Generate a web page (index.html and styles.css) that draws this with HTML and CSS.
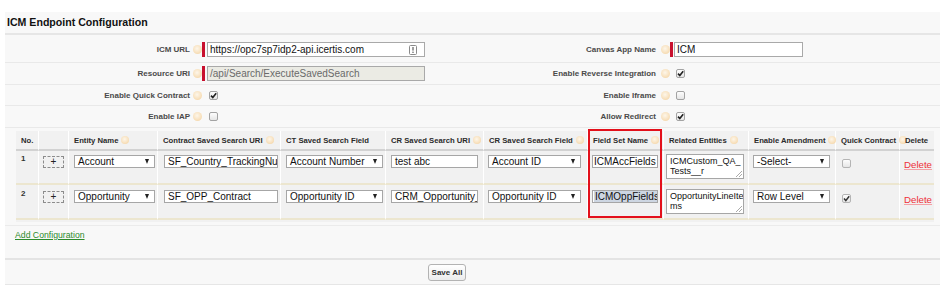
FILE: index.html
```html
<!DOCTYPE html>
<html>
	<head>
		<meta charset="UTF-8">
		<title>ICM Endpoint Configuration</title>
		<link rel="stylesheet" href="styles.css">
	</head>
	<body>
		<div class="panel">
			<div class="panel-title">ICM Endpoint Configuration</div>

			<div class="form">
				<div class="row first">
					<label>ICM URL</label><span class="help"></span>
					<div class="field"><span class="req"></span><div class="txt wide">https://opc7sp7idp2-api.icertis.com<svg class="key" width="8" height="10" viewBox="0 0 8 10"><rect x="0.5" y="0.5" width="7" height="9" rx="1" fill="#fff" stroke="#8a8a8a"/><rect x="3.3" y="2" width="1.4" height="3.6" fill="#777"/><rect x="3.3" y="6.6" width="1.4" height="1.4" fill="#777"/></svg></div></div>
					<label>Canvas App Name</label><span class="help"></span>
					<div class="field"><span class="req"></span><div class="txt short">ICM</div></div>
				</div>
				<div class="row">
					<label>Resource URI</label><span class="help"></span>
					<div class="field"><span class="req"></span><div class="txt wide off">/api/Search/ExecuteSavedSearch</div></div>
					<label>Enable Reverse Integration</label><span class="help"></span>
					<div class="field"><span class="cb on r"><svg width="9" height="9" viewBox="0 0 9 9"><path d="M2 4.6 L3.8 6.6 L7.2 2.2" fill="none" stroke="#222" stroke-width="1.6"/></svg></span></div>
				</div>
				<div class="row short-row">
					<label>Enable Quick Contract</label><span class="help"></span>
					<div class="field"><span class="cb on"><svg width="9" height="9" viewBox="0 0 9 9"><path d="M2 4.6 L3.8 6.6 L7.2 2.2" fill="none" stroke="#222" stroke-width="1.6"/></svg></span></div>
					<label>Enable Iframe</label><span class="help"></span>
					<div class="field"><span class="cb r"></span></div>
				</div>
				<div class="row">
					<label>Enable IAP</label><span class="help"></span>
					<div class="field"><span class="cb"></span></div>
					<label>Allow Redirect</label><span class="help"></span>
					<div class="field"><span class="cb on r"><svg width="9" height="9" viewBox="0 0 9 9"><path d="M2 4.6 L3.8 6.6 L7.2 2.2" fill="none" stroke="#222" stroke-width="1.6"/></svg></span></div>
				</div>
			</div>

			<div class="grid-wrap">
				<table class="cfg">
					<colgroup>
						<col class="w-no"><col class="w-add"><col class="w-ent"><col class="w-csu"><col class="w-ctf"><col class="w-cru">
						<col class="w-crf"><col class="w-fsn"><col class="w-rel"><col class="w-amd"><col class="w-qc"><col class="w-del">
					</colgroup>
					<tr class="head">
						<th>No.</th>
						<th></th>
						<th>Entity Name<span class="help sm"></span></th>
						<th>Contract Saved Search URI<span class="help sm"></span></th>
						<th>CT Saved Search Field</th>
						<th>CR Saved Search URI<span class="help sm"></span></th>
						<th>CR Saved Search Field<span class="help sm"></span></th>
						<th>Field Set Name<span class="help sm"></span></th>
						<th>Related Entities<span class="help sm"></span></th>
						<th>Enable Amendment<span class="help sm"></span></th>
						<th>Quick Contract<span class="help sm"></span></th>
						<th>Delete</th>
					</tr>
					<tr class="r1">
						<td class="num">1</td>
						<td><span class="plus">+</span></td>
						<td><div class="sel s-ent">Account<span class="arr"></span></div></td>
						<td><div class="inp i-csu">SF_Country_TrackingNumber</div></td>
						<td><div class="sel s-ctf">Account Number<span class="arr"></span></div></td>
						<td><div class="inp i-cru">test abc</div></td>
						<td><div class="sel s-crf">Account ID<span class="arr"></span></div></td>
						<td><div class="inp i-fsn">ICMAccFields</div></td>
						<td><div class="area">ICMCustom_QA_<br>Tests__r<span class="grip"></span></div></td>
						<td><div class="sel s-amd">-Select-<span class="arr"></span></div></td>
						<td><span class="cb qc"></span></td>
						<td><a class="del" href="#">Delete</a></td>
					</tr>
					<tr class="r2">
						<td class="num">2</td>
						<td><span class="plus">+</span></td>
						<td><div class="sel s-ent">Opportunity<span class="arr"></span></div></td>
						<td><div class="inp i-csu">SF_OPP_Contract</div></td>
						<td><div class="sel s-ctf">Opportunity ID<span class="arr"></span></div></td>
						<td><div class="inp i-cru">CRM_Opportunity_Contract</div></td>
						<td><div class="sel s-crf">Opportunity ID<span class="arr"></span></div></td>
						<td><div class="inp i-fsn"><span class="picked">ICMOppFields</span></div></td>
						<td><div class="area">OpportunityLineIte<br>ms<span class="grip"></span></div></td>
						<td><div class="sel s-amd">Row Level<span class="arr"></span></div></td>
						<td><span class="cb qc on"><svg width="9" height="9" viewBox="0 0 9 9"><path d="M2 4.6 L3.8 6.6 L7.2 2.2" fill="none" stroke="#333" stroke-width="1.5"/></svg></span></td>
						<td><a class="del" href="#">Delete</a></td>
					</tr>
				</table>
				<div class="mark"></div>
			</div>

			<div class="add-row"><a class="add" href="#">Add Configuration</a></div>

			<div class="actions"><span class="btn">Save All</span></div>
		</div>
	</body>
</html>
```

FILE: styles.css
```css
*{
	box-sizing: border-box;
	margin: 0;
	padding: 0;
}

body{
	background: #fff;
	font-family: "Liberation Sans", Arial, sans-serif;
	color: #333;
}

.panel{
	width: 935px;
	margin: 12px 0 0 5px;
	background: #f8f8f8;
}
.panel-title{
	height: 23px;
	line-height: 21px;
	padding-left: 2px;
	font-size: 10.6px;
	font-weight: bold;
	color: #111;
	border-bottom: 2px solid #e6e6e6;
}

/* top form, two columns of label / help / field */
.row{
	display: grid;
	grid-template-columns: 187px 10px 280px 178px 10px 1fr;
	align-items: center;
	height: 22px;
	border-bottom: 1px solid #e9e9e9;
}
.row.first{
	height: 28px;
	padding-top: 2px;
}
.row.short-row{
	height: 21px;
}
.row label{
	text-align: right;
	font-size: 8px;
	font-weight: bold;
	color: #4a4a4a;
	white-space: nowrap;
	padding-right: 2px;
}
.row label:nth-of-type(2){
	padding-right: 4px;
}
.field{
	display: flex;
	align-items: center;
}

.help{
	display: inline-block;
	width: 9px;
	height: 9px;
	border-radius: 50%;
	background: radial-gradient(circle at 45% 40%, #fdf6ea 0, #f8e2c0 55%, #f1cd97 100%);
	justify-self: center;
}
.help.sm{
	width: 8px;
	height: 8px;
	margin-left: 3px;
	vertical-align: -1px;
}

.req{
	width: 3px;
	height: 15px;
	background: #c8102e;
	margin-right: 2px;
}
.txt{
	position: relative;
	height: 15px;
	border: 1px solid #a9a9a9;
	background: #fff;
	font-size: 10px;
	line-height: 13px;
	padding: 0 2px;
	color: #111;
	white-space: nowrap;
	overflow: hidden;
}
.txt.wide{
	width: 218px;
}
.txt.short{
	width: 129px;
	margin-left: -1px;
}
.txt.off{
	background: #ebebe4;
	color: #6a6a6a;
}
.key{
	position: absolute;
	right: 7px;
	top: 2px;
}

.cb{
	display: inline-block;
	width: 9px;
	height: 9px;
	border: 1px solid #a3a3a3;
	border-radius: 2px;
	background: linear-gradient(#fdfdfd, #e6e6e6);
	margin-left: 7px;
	position: relative;
}
.cb svg{
	position: absolute;
	left: -1px;
	top: -1px;
}
.cb.r{
	margin-left: 6px;
}

/* configuration grid */
.grid-wrap{
	position: relative;
	width: 918px;
	margin: 3px 0 0 11px;
	padding-bottom: 2px;
	background: #f1f1f1;
}
.cfg{
	width: 918px;
	table-layout: fixed;
	border-collapse: separate;
	border-spacing: 0;
}
.w-no{width: 22px;}
.w-add{width: 30px;}
.w-ent{width: 89px;}
.w-csu{width: 123px;}
.w-ctf{width: 105px;}
.w-cru{width: 98px;}
.w-crf{width: 104px;}
.w-fsn{width: 76px;}
.w-rel{width: 85px;}
.w-amd{width: 87px;}
.w-qc{width: 64px;}
.w-del{width: 35px;}

.cfg tr.head{
	height: 20px;
}
.cfg tr.r1{
	height: 34px;
}
.cfg tr.r2{
	height: 35px;
}
.cfg th{
	text-align: left;
	font-size: 7.7px;
	font-weight: bold;
	color: #2b2b2b;
	line-height: 17px;
	padding: 0 0 0 5px;
	white-space: nowrap;
	border-left: 1px solid #fff;
	border-bottom: 2px solid #d2d2d2;
}
.cfg th:first-child{
	border-left: 0;
}
.cfg td{
	vertical-align: top;
	padding: 3px 0 0 0;
	border-left: 1px solid #fff;
	border-bottom: 2px solid #ece6cf;
}
.cfg tr.r2 td{
	padding-top: 4px;
}
.cfg td:first-child{
	border-left: 0;
}
.cfg td.num{
	font-size: 8px;
	font-weight: bold;
	padding-top: 3px;
	padding-left: 5px;
}

.plus{
	display: block;
	width: 21px;
	height: 12px;
	margin: 2px 0 0 4px;
	border: 1px dashed #8c8c8c;
	text-align: center;
	font-size: 10px;
	line-height: 9px;
	color: #222;
}

.sel, .inp, .area{
	position: relative;
	height: 13px;
	border: 1px solid #a6a6a6;
	background: #fff;
	font-size: 10px;
	line-height: 11px;
	padding: 0 3px;
	color: #111;
	white-space: nowrap;
	overflow: hidden;
	margin-top: 1px;
}
.arr{
	position: absolute;
	right: 5px;
	top: 3px;
	width: 0;
	height: 0;
	border-left: 2.5px solid transparent;
	border-right: 2.5px solid transparent;
	border-top: 5px solid #222;
}
.s-ent{width: 81px; margin-left: 5px;}
.i-csu{width: 114px; margin-left: 6px;}
.s-ctf{width: 97px; margin-left: 5px;}
.i-cru{width: 87px; margin-left: 5px;}
.s-crf{width: 93px; margin-left: 4px;}
.i-fsn{width: 66px; margin-left: 4px; padding: 0 1px;}
.s-amd{width: 77px; margin-left: 4px;}
.picked{
	background: #cdd6e2;
	padding: 0 1px;
}

.area{
	width: 78px;
	height: 25px;
	margin: 0 0 0 2px;
	font-size: 9px;
	line-height: 10px;
	padding: 1px 3px;
	white-space: normal;
}
.grip{
	position: absolute;
	right: 1px;
	bottom: 1px;
	width: 6px;
	height: 6px;
	background: linear-gradient(135deg, transparent 45%, #aaa 45%, #aaa 55%, transparent 55%, transparent 72%, #aaa 72%, #aaa 82%, transparent 82%);
}

.cb.qc{
	margin: 3px 0 0 6px;
	border-color: #b4b4b4;
}

.del{
	display: inline-block;
	margin: 1px 0 0 4px;
	font-size: 9.7px;
	color: #ee2f38;
	text-decoration: underline;
	text-decoration-color: #f4a0a4;
}

.mark{
	position: absolute;
	left: 572px;
	top: -2px;
	width: 74px;
	height: 89px;
	border: 2px solid #e3101b;
}

/* footer */
.add-row{
	height: 33px;
	margin-top: 3px;
	border-top: 1px solid #ebebeb;
	padding: 4px 0 0 10px;
	font-size: 8.7px;
	line-height: 11px;
}
.add{
	color: #2c8b2c;
	text-decoration: underline;
}
.actions{
	height: 27px;
	border-top: 2px solid #e4e4e4;
	border-bottom: 1px solid #e6e6e6;
	padding: 4px 0 0 423px;
	font-size: 8px;
	line-height: 17px;
}
.btn{
	display: inline-block;
	width: 38px;
	height: 17px;
	border: 1px solid #b3b3b3;
	border-radius: 3px;
	background: linear-gradient(#fff, #ececec);
	text-align: center;
	font-weight: bold;
	line-height: 15px;
	color: #333;
	vertical-align: top;
}
```
